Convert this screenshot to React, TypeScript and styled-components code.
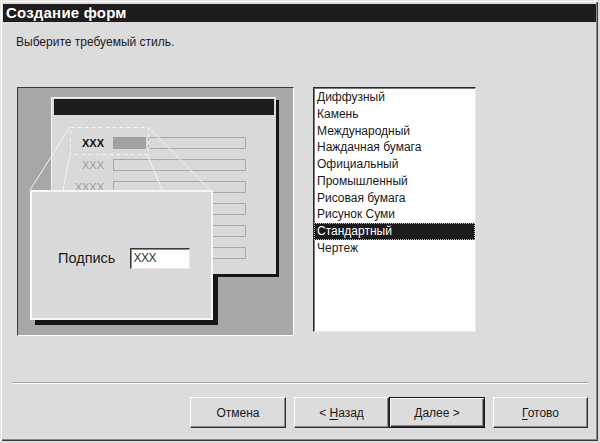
import React from 'react';
import styled, { createGlobalStyle } from 'styled-components';

const GlobalStyle = createGlobalStyle`
	html, body {
		margin: 0;
		padding: 0;
		background: #dcdcdc;
	}
	body {
		font-family: 'Liberation Sans', Arial, sans-serif;
	}
`;

const styles = [
	'Диффузный',
	'Камень',
	'Международный',
	'Наждачная бумага',
	'Официальный',
	'Промышленный',
	'Рисовая бумага',
	'Рисунок Суми',
	'Стандартный',
	'Чертеж'
];

// rows of the miniature form; the last three are hidden under the zoomed popup
const miniRows = ['XXX', 'XXXX', '', '', ''];

const Window = styled.div`
	box-sizing: border-box;
	width: 598px;
	height: 441px;
	padding: 4px 2px 0 3px;
	display: flex;
	flex-direction: column;
	background: #dcdcdc;
	box-shadow: inset 1px 1px 0 #e6e6e6, inset 2px 2px 0 #ffffff, inset -1px -1px 0 #3a3a3a, inset -2px -2px 0 #8a8a8a;
`;

const TitleBar = styled.div`
	height: 18px;
	background: #1e1c1d;
	color: #ffffff;
	font-weight: bold;
	font-size: 15px;
	line-height: 18px;
	padding-left: 3px;
	letter-spacing: 0.2px;
`;

const Prompt = styled.div`
	margin: 13px 0 0 13px;
	font-size: 12px;
	line-height: 15px;
	color: #1a1a1a;
`;

const Content = styled.div`
	display: flex;
	align-items: flex-start;
	gap: 19px;
	margin: 37px 0 0 14px;
`;

const Preview = styled.div`
	position: relative;
	box-sizing: border-box;
	width: 277px;
	height: 249px;
	background: #a7a7a7;
	border: 1px solid;
	border-color: #3a3a3a #ffffff #ffffff #3a3a3a;
	overflow: hidden;
`;

const MiniForm = styled.div`
	position: absolute;
	left: 33px;
	top: 9px;
	z-index: 1;
	box-sizing: border-box;
	width: 225px;
	height: 177px;
	padding: 1px 2px 0 2px;
	background: #d9d9d9;
	border-left: 1px solid #f2f2f2;
	border-top: 1px solid #f2f2f2;
	box-shadow: 3px 3px 0 #151515;
`;

const MiniTitle = styled.div`
	height: 16px;
	background: #1e1c1d;
`;

const MiniRows = styled.div`
	display: flex;
	flex-direction: column;
	gap: 10px;
	margin-top: 22px;
`;

const MiniRow = styled.div`
	display: flex;
	align-items: center;
	height: 12px;
	gap: 9px;
`;

const MiniLabel = styled.span<{ $strong?: boolean }>`
	width: 50px;
	text-align: right;
	font-size: 11px;
	line-height: 12px;
	font-weight: ${(p) => (p.$strong ? 'bold' : 'normal')};
	color: ${(p) => (p.$strong ? '#111111' : '#9c9c9c')};
`;

const MiniFields = styled.div`
	display: flex;
	gap: 2px;
`;

const MiniField = styled.div<{ $w: number; $filled?: boolean }>`
	box-sizing: border-box;
	width: ${(p) => p.$w}px;
	height: 12px;
	background: ${(p) => (p.$filled ? '#a2a2a2' : '#d9d9d9')};
	border: 1px solid ${(p) => (p.$filled ? '#a2a2a2' : '#a9a9a9')};
`;

const Zoom = styled.svg`
	position: absolute;
	left: 0;
	top: 0;
	z-index: 2;
`;

const PopupShadow = styled.div`
	position: absolute;
	left: 17px;
	top: 107px;
	width: 183px;
	height: 130px;
	background: #151515;
	z-index: 0;
`;

const Popup = styled.div`
	position: absolute;
	left: 12px;
	top: 102px;
	z-index: 3;
	box-sizing: border-box;
	width: 183px;
	height: 130px;
	background: #dadada;
	border: 2px solid #f7f7f7;
	display: flex;
	align-items: center;
	gap: 15px;
	padding: 6px 0 0 26px;
`;

const PopupLabel = styled.span`
	font-size: 14.5px;
	color: #1a1a1a;
`;

const PopupInput = styled.div`
	box-sizing: border-box;
	width: 60px;
	height: 21px;
	background: #ffffff;
	border: 1px solid;
	border-color: #3a3a3a #e8e8e8 #e8e8e8 #3a3a3a;
	box-shadow: inset 1px 1px 0 #8a8a8a;
	font-size: 12px;
	line-height: 18px;
	padding-left: 2px;
	color: #333333;
	letter-spacing: -0.5px;
`;

const List = styled.ul`
	box-sizing: border-box;
	width: 163px;
	height: 245px;
	margin: 0;
	padding: 1px 0;
	list-style: none;
	background: #ffffff;
	border: 1px solid;
	border-color: #2a2a2a #e8e8e8 #e8e8e8 #2a2a2a;
	box-shadow: inset 1px 1px 0 #7a7a7a;
`;

const ListItem = styled.li<{ $selected?: boolean }>`
	box-sizing: border-box;
	height: 16.75px;
	line-height: 15px;
	padding-left: 2px;
	font-size: 12px;
	color: ${(p) => (p.$selected ? '#ffffff' : '#1a1a1a')};
	background: ${(p) => (p.$selected ? '#1d1b1c' : 'transparent')};
	border: 1px dotted ${(p) => (p.$selected ? '#bdbdbd' : 'transparent')};
`;

const Separator = styled.div`
	margin: 46px 8px 0 10px;
	height: 1px;
	background: #a2a2a2;
	border-bottom: 1px solid #ffffff;
`;

const ButtonRow = styled.div`
	display: flex;
	justify-content: flex-end;
	margin: 13px 8px 0 0;
`;

const Button = styled.button<{ $w: number; $gap?: number; $default?: boolean }>`
	box-sizing: border-box;
	width: ${(p) => p.$w}px;
	height: 31px;
	margin-left: ${(p) => p.$gap ?? 0}px;
	padding: 0;
	font-family: 'Liberation Sans', Arial, sans-serif;
	font-size: 12px;
	color: #1a1a1a;
	background: #dcdcdc;
	border: 1px solid;
	border-color: ${(p) => (p.$default ? '#151515' : '#ffffff #2e2e2e #2e2e2e #ffffff')};
	box-shadow: ${(p) =>
		p.$default
			? 'inset 1px 1px 0 #ffffff, inset -1px -1px 0 #2e2e2e, inset -2px -2px 0 #8a8a8a'
			: 'inset -1px -1px 0 #8a8a8a'};
	u {
		text-decoration: underline;
		text-underline-offset: 2px;
	}
`;

export default function App() {
	return (
		<>
			<GlobalStyle />
			<Window>
				<TitleBar>Создание форм</TitleBar>
				<Prompt>Выберите требуемый стиль.</Prompt>
				<Content>
					<Preview>
						<PopupShadow />
						<MiniForm>
							<MiniTitle />
							<MiniRows>
								<MiniRow>
									<MiniLabel $strong>XXX</MiniLabel>
									<MiniFields>
										<MiniField $w={33} $filled />
										<MiniField $w={98} />
									</MiniFields>
								</MiniRow>
								{miniRows.map((label, i) => (
									<MiniRow key={i}>
										<MiniLabel>{label}</MiniLabel>
										<MiniField $w={133} />
									</MiniRow>
								))}
							</MiniRows>
						</MiniForm>
						<Zoom width='275' height='247' viewBox='0 0 275 247'>
							<rect x='52.5' y='39.5' width='78' height='27' fill='none' stroke='#f4f4f4' strokeDasharray='4 3' />
							<g stroke='#f4f4f4' strokeWidth='1'>
								<line x1='52' y1='39' x2='12' y2='102' />
								<line x1='52' y1='66' x2='45' y2='102' />
								<line x1='129' y1='66' x2='144' y2='102' />
								<line x1='130' y1='39' x2='192' y2='102' />
							</g>
						</Zoom>
						<Popup>
							<PopupLabel>Подпись</PopupLabel>
							<PopupInput>XXX</PopupInput>
						</Popup>
					</Preview>
					<List>
						{styles.map((s) => (
							<ListItem key={s} $selected={s === 'Стандартный'}>
								{s}
							</ListItem>
						))}
					</List>
				</Content>
				<Separator />
				<ButtonRow>
					<Button $w={96}>Отмена</Button>
					<Button $w={95} $gap={8}>
						&lt; <u>Н</u>азад
					</Button>
					<Button $w={96} $default>
						<u>Д</u>алее &gt;
					</Button>
					<Button $w={95} $gap={8}>
						<u>Г</u>отово
					</Button>
				</ButtonRow>
			</Window>
		</>
	);
}
